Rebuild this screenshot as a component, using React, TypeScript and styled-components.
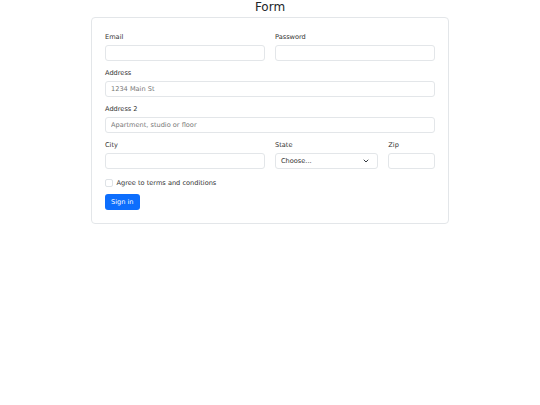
import React from 'react'
import styled, { createGlobalStyle } from 'styled-components'

const GlobalStyle = createGlobalStyle`
    body {
        margin: 0;
        background: #fff;
        font-family: "DejaVu Sans", "Liberation Sans", sans-serif;
        color: #212529;
    }
`

const Page = styled.div`
    width: 540px;
    display: flex;
    flex-direction: column;
    align-items: center;
`

const Title = styled.h1`
    margin: 0 0 2px;
    font-size: 12px;
    font-weight: 400;
    line-height: 15px;
`

const Card = styled.form`
    box-sizing: border-box;
    width: 358px;
    border: 1px solid #e3e6e9;
    border-radius: 4px;
    padding: 14px 13px 13px;
    display: flex;
    flex-direction: column;
    gap: 7px;
`

const Row = styled.div`
    display: grid;
    grid-template-columns: repeat(12, 1fr);
    column-gap: 10px;
`

const Field = styled.div<{ span: number }>`
    grid-column: span ${(p) => p.span};
    display: flex;
    flex-direction: column;
`

const Label = styled.label`
    font-size: 6.6px;
    line-height: 10px;
    margin-bottom: 3px;
    color: #333;
`

const Input = styled.input`
    box-sizing: border-box;
    height: 16px;
    width: 100%;
    border: 1px solid #e3e6e9;
    border-radius: 3px;
    padding: 0 5px;
    font-family: inherit;
    font-size: 6.6px;
    color: #212529;
    outline: none;

    &::placeholder {
        color: #777;
    }
`

const SelectBox = styled.div`
    box-sizing: border-box;
    height: 16px;
    border: 1px solid #e3e6e9;
    border-radius: 3px;
    padding: 0 8px 0 5px;
    font-size: 6.6px;
    color: #333;
    display: flex;
    align-items: center;
    justify-content: space-between;
`

const CheckRow = styled.label`
    display: flex;
    align-items: center;
    gap: 4px;
    font-size: 6.6px;
    line-height: 10px;
    color: #333;
    margin-top: 2px;
`

const CheckBox = styled.span`
    box-sizing: border-box;
    width: 7.5px;
    height: 7.5px;
    border: 1px solid #dee2e6;
    border-radius: 2px;
`

const Actions = styled.div`
    margin-top: -6px;
`

const Button = styled.button`
    box-sizing: border-box;
    height: 16px;
    padding: 0 6px;
    border: none;
    border-radius: 3px;
    background: #0d6efd;
    color: #fff;
    font-family: inherit;
    font-size: 6.6px;
`

const App = () => {
    return (
        <>
            <GlobalStyle />
            <Page>
                <Title>Form</Title>
                <Card onSubmit={(e) => e.preventDefault()}>
                    <Row>
                        <Field span={6}>
                            <Label>Email</Label>
                            <Input type="email" />
                        </Field>
                        <Field span={6}>
                            <Label>Password</Label>
                            <Input type="password" />
                        </Field>
                    </Row>
                    <Row>
                        <Field span={12}>
                            <Label>Address</Label>
                            <Input placeholder="1234 Main St" />
                        </Field>
                    </Row>
                    <Row>
                        <Field span={12}>
                            <Label>Address 2</Label>
                            <Input placeholder="Apartment, studio or floor" />
                        </Field>
                    </Row>
                    <Row>
                        <Field span={6}>
                            <Label>City</Label>
                            <Input />
                        </Field>
                        <Field span={4}>
                            <Label>State</Label>
                            <SelectBox>
                                <span>Choose...</span>
                                <svg width="6" height="4" viewBox="0 0 6 4">
                                    <path d="M1 1l2 2 2-2" fill="none" stroke="#343a40" strokeWidth="1" strokeLinecap="round" strokeLinejoin="round" />
                                </svg>
                            </SelectBox>
                        </Field>
                        <Field span={2}>
                            <Label>Zip</Label>
                            <Input />
                        </Field>
                    </Row>
                    <CheckRow>
                        <CheckBox />
                        Agree to terms and conditions
                    </CheckRow>
                    <Actions>
                        <Button type="submit">Sign in</Button>
                    </Actions>
                </Card>
            </Page>
        </>
    )
}

export default App
